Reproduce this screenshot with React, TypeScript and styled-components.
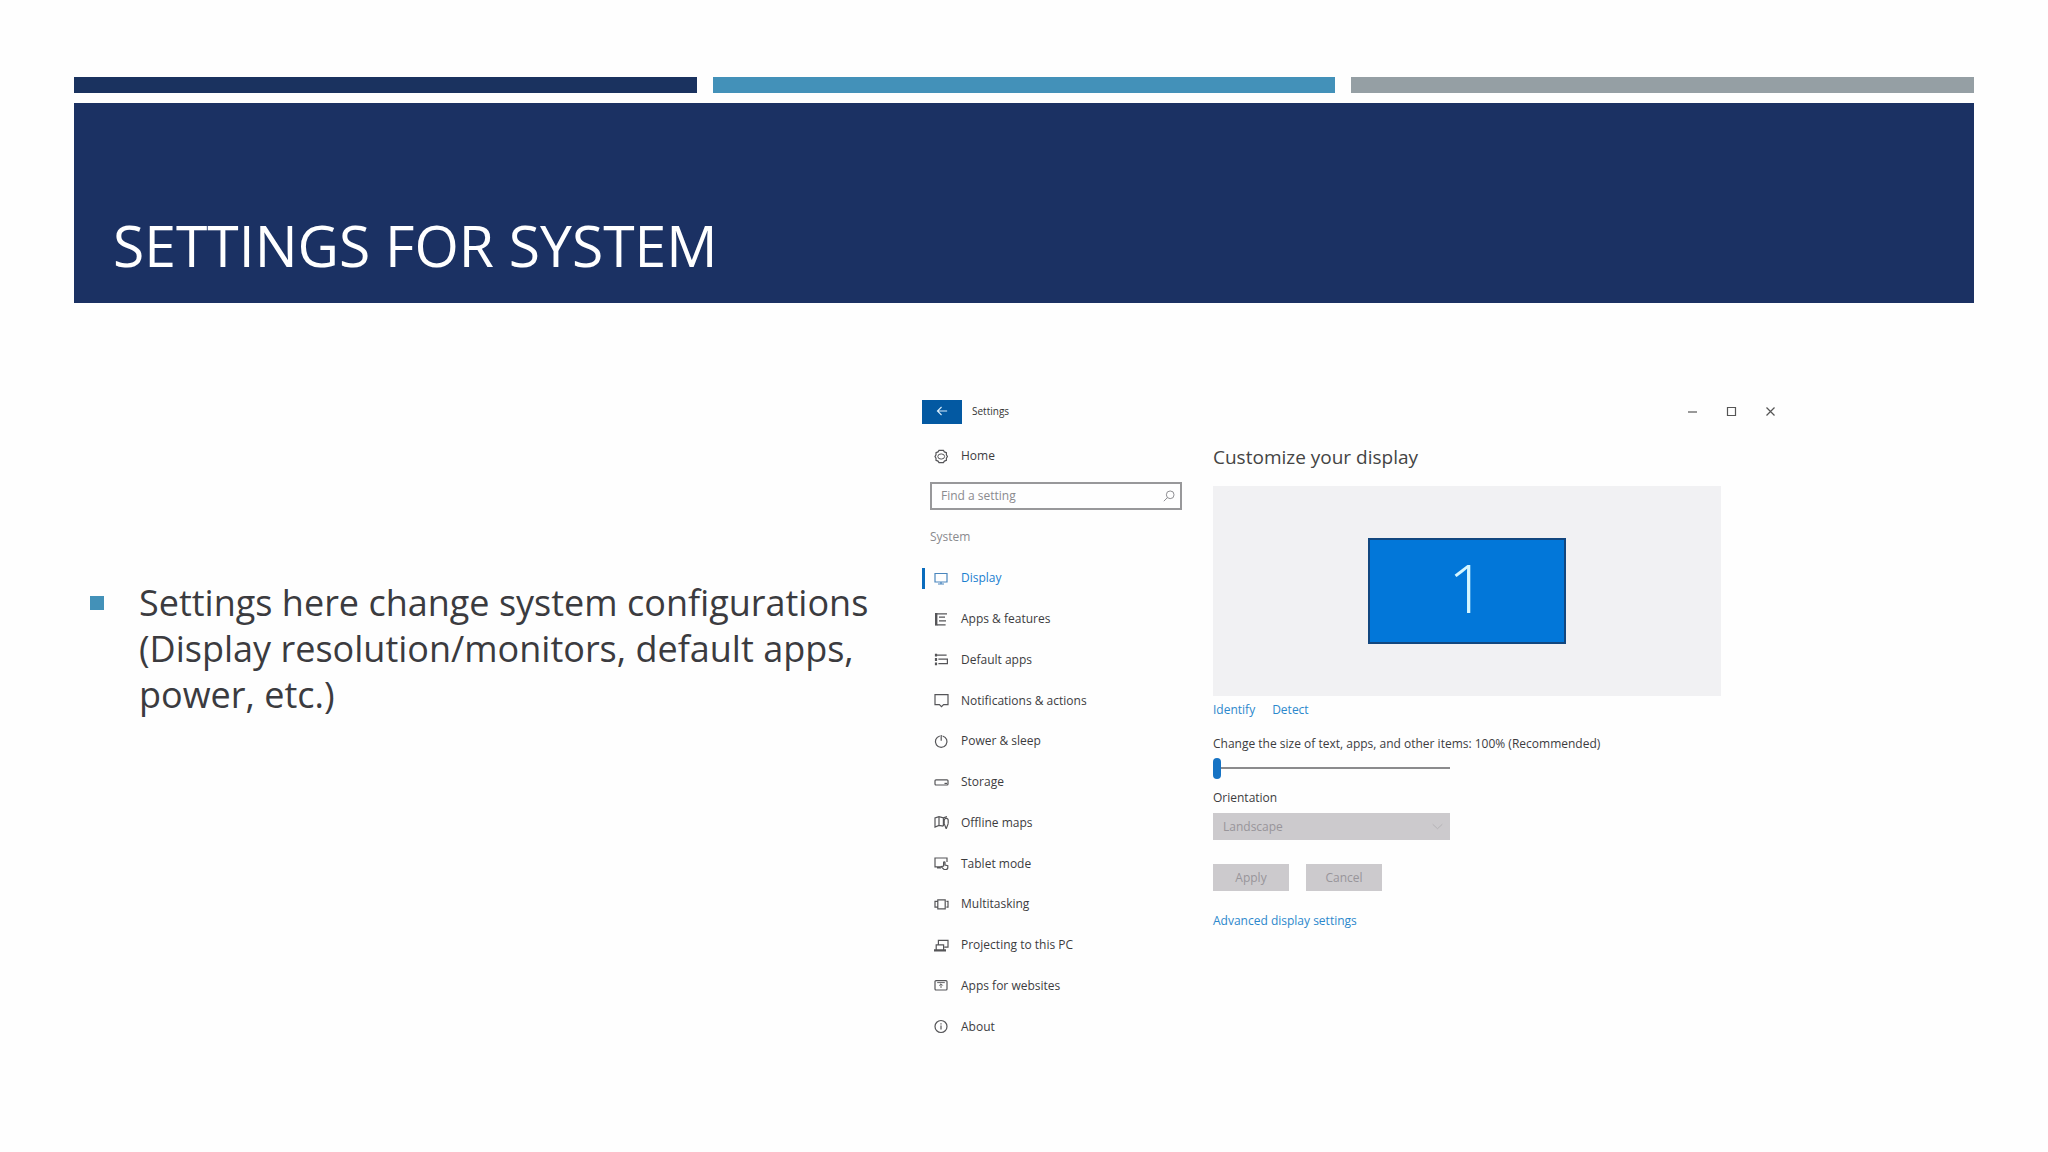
import React from "react";
import styled, { createGlobalStyle } from "styled-components";

const GlobalStyle = createGlobalStyle`
  *, *::before, *::after { box-sizing: border-box; }
  body {
    margin: 0;
    background: #fefefe;
    color: #3b3b3f;
    font-family: "Open Sans", "Noto Sans", sans-serif;
  }
  button, input, select { font: inherit; }
`;

const Slide = styled.main`
  min-height: 100vh;
  padding: 77px 74px 48px;
`;

const Stripes = styled.div`
  display: grid;
  grid-template-columns: repeat(3, 1fr);
  gap: 16px;
  margin-bottom: 10px;
`;

const Stripe = styled.div<{ $color: string }>`
  height: 16px;
  background: ${(p) => p.$color};
`;

const Banner = styled.header`
  display: flex;
  align-items: flex-end;
  min-height: 200px;
  padding: 0 39px 18px;
  background: #1b3163;
`;

const Title = styled.h1`
  margin: 0;
  color: #fff;
  font-size: 57px;
  line-height: 80px;
  font-weight: 400;
  text-transform: uppercase;
`;

const Body = styled.div`
  display: grid;
  grid-template-columns: 848fr 1052fr;
  padding-top: 97px;
`;

const Points = styled.ul`
  margin: 0;
  padding: 180px 16px 0;
  list-style: none;
`;

const Point = styled.li`
  display: flex;
  gap: 35px;
  font-size: 36px;
  line-height: 46px;

  &::before {
    content: "";
    flex: none;
    width: 14px;
    height: 14px;
    margin-top: 16px;
    background: #4391b8;
  }
`;

const Window = styled.section`
  max-width: 868px;
  font-size: 12px;
  line-height: 20px;
`;

const TitleBar = styled.div`
  display: flex;
  align-items: center;
  height: 24px;
`;

const BackButton = styled.button`
  display: grid;
  place-items: center;
  width: 40px;
  height: 24px;
  padding: 0 0 2px;
  border: 0;
  background: #0359a2;
  color: #d8ecfb;
`;

const WindowName = styled.span`
  flex: 1;
  padding: 0 0 2px 10px;
  font-size: 10px;
  color: #333;
`;

const WindowControls = styled.div`
  display: flex;
`;

const WindowButton = styled.button`
  display: grid;
  place-items: center;
  width: 39px;
  height: 24px;
  padding: 0 0 2px;
  border: 0;
  background: none;
  color: #555;
`;

const Columns = styled.div`
  display: grid;
  grid-template-columns: 260px minmax(0, 508px);
  column-gap: 31px;
`;

const Sidebar = styled.nav`
  padding-top: 12px;
`;

const NavItem = styled.a<{ $active?: boolean }>`
  display: flex;
  align-items: center;
  gap: 12px;
  height: 40px;
  padding-left: 12px;
  color: ${(p) => (p.$active ? "#1b7fd0" : "#3c3c3e")};
  text-decoration: none;
  background: ${(p) =>
    p.$active
      ? "linear-gradient(#0a6cbd, #0a6cbd) left center / 3px 21px no-repeat"
      : "none"};

  svg {
    flex: none;
    color: ${(p) => (p.$active ? "#4a86bd" : "#555558")};
  }
`;

const SearchBox = styled.label`
  display: flex;
  align-items: center;
  width: 252px;
  height: 28px;
  margin: 6px 0 17px 8px;
  padding: 0 5px 0 9px;
  border: 2px solid #98989a;
  color: #8a8a8e;
`;

const SearchInput = styled.input`
  flex: 1;
  min-width: 0;
  padding: 0;
  border: 0;
  outline: 0;
  background: none;
  color: inherit;

  &::placeholder { color: #8a8a8e; opacity: 1; }
`;

const GroupName = styled.h2`
  margin: 0 0 11px 8px;
  font-size: 12px;
  line-height: 20px;
  font-weight: 400;
  color: #8a8a8e;
`;

const NavList = styled.ul`
  display: grid;
  grid-auto-rows: 1fr;
  height: 489px;
  margin: 0;
  padding: 0;
  list-style: none;
  align-items: center;
`;

const Panel = styled.div`
  display: flex;
  flex-direction: column;
  align-items: flex-start;
  padding-top: 17px;
`;

const PanelTitle = styled.h2`
  margin: 0 0 13px;
  font-size: 19px;
  line-height: 32px;
  font-weight: 400;
  color: #444;
`;

const Preview = styled.div`
  display: grid;
  place-items: center;
  align-self: stretch;
  height: 210px;
  background: #f1f1f3;
`;

const Monitor = styled.div`
  width: 198px;
  height: 106px;
  border: 2px solid #12477f;
  background: #0277d9;
  color: #d5f6ff;
  font-size: 66px;
  line-height: 94px;
  font-weight: 300;
  text-align: center;
`;

const Links = styled.div`
  display: flex;
  gap: 17px;
  margin: 4px 0 14px;
`;

const TextLink = styled.a`
  color: #2c88cc;
  text-decoration: none;
`;

const FieldLabel = styled.label`
  color: #3c3c3e;
`;

const Slider = styled.input`
  appearance: none;
  width: 237px;
  height: 22px;
  margin: 3px 0 9px;
  background: linear-gradient(#8b8b8d, #8b8b8d) center / 100% 2px no-repeat;

  &::-webkit-slider-thumb {
    appearance: none;
    width: 8px;
    height: 21px;
    border-radius: 4px;
    background: #1673c4;
  }
`;

const SelectBox = styled.div`
  position: relative;
  width: 237px;
  margin: 5px 0 24px;
  color: #b2afb3;

  svg {
    position: absolute;
    top: 8px;
    right: 7px;
    pointer-events: none;
  }
`;

const Select = styled.select`
  display: block;
  appearance: none;
  width: 100%;
  height: 27px;
  padding: 0 10px;
  border: 0;
  border-radius: 0;
  background: #cccacd;
  color: #98959a;
  opacity: 1;
`;

const Actions = styled.div`
  display: flex;
  gap: 17px;
  margin-bottom: 20px;
`;

const ActionButton = styled.button`
  width: 76px;
  height: 27px;
  padding: 0;
  border: 0;
  background: #cccacd;
  color: #98959a;
`;

type IconProps = { size?: number; children: React.ReactNode };

function Icon({ size = 15, children }: IconProps) {
  return (
    <svg
      width={size}
      height={size}
      viewBox="0 0 15 15"
      fill="none"
      stroke="currentColor"
      strokeWidth="1.2"
      aria-hidden="true"
    >
      {children}
    </svg>
  );
}

const items: { label: string; icon: React.ReactNode }[] = [
  { label: "Display", icon: <path d="M1 2.5h12v8.5H1zM4 13h6M7 11v2" /> },
  {
    label: "Apps & features",
    icon: (
      <>
        <path d="M2.2 1v12.6" strokeWidth="2.4" />
        <path d="M3 1.8h10M5 5.2h6M5 8.8h7M3 12.8h8.6" />
      </>
    ),
  },
  {
    label: "Default apps",
    icon: (
      <>
        <path d="M2 1.8v11.4" strokeWidth="2.2" strokeDasharray="2.8 1.5" />
        <path d="M2 3.2h10.6M4.4 7.2h9v4.4h-9" />
      </>
    ),
  },
  {
    label: "Notifications & actions",
    icon: <path d="M1 1.6h13v10H9.6L7.5 13.6 5.4 11.6H1z" />,
  },
  {
    label: "Power & sleep",
    icon: <path d="M5.8 2a5.8 5.8 0 1 0 2.8 0M7.2 1v5.8" />,
  },
  {
    label: "Storage",
    icon: (
      <>
        <rect x="1" y="4.8" width="13" height="5.2" rx="1" />
        <path d="M10.5 8.4h2.6" />
      </>
    ),
  },
  {
    label: "Offline maps",
    icon: (
      <>
        <path d="M9.4 11.2 5 10.4 1 12V3l4-1.4 4.4 1.2L13 1.6M5 1.6v9M9.4 3v8" />
        <path d="M12.2 13.8 10.2 8.6M12.2 13.8l2-5.2M10.2 8.6V5.4a2 2 0 0 1 4 0v3.2" />
      </>
    ),
  },
  {
    label: "Tablet mode",
    icon: (
      <>
        <path d="M6.4 10.8H1V2h12v4M3 11.8h4" />
        <path d="M9.6 10V6.6c0-1 1.4-1 1.4 0V9l2.8.7v1.8c0 1.2-.8 2-2 2H10L7 10.6z" />
      </>
    ),
  },
  {
    label: "Multitasking",
    icon: (
      <path d="M3.8 2.8h7.4v9H3.8zM3.4 4.4H1v5.8h2.4M12.4 4.4H14v5.8h-1.6" />
    ),
  },
  {
    label: "Projecting to this PC",
    icon: (
      <path d="M4.4 6.6V2.4H14v6.8h-3.6M2.2 11.4V6.8h7.4v4.6M.6 11.8h10.8v1.2H.6z" />
    ),
  },
  {
    label: "Apps for websites",
    icon: (
      <>
        <rect x="1" y="2.6" width="12" height="9.4" rx="1" />
        <path d="M7 10V6M5.2 7.6 7 5.8l1.8 1.8M3.2 4.6h7.6" strokeWidth=".9" />
      </>
    ),
  },
  {
    label: "About",
    icon: (
      <>
        <circle cx="7" cy="7.5" r="6" />
        <path d="M7 6.6v4M7 4.2v1.4" />
      </>
    ),
  },
];

export default function App() {
  return (
    <>
      <GlobalStyle />
      <Slide>
        <Stripes>
          <Stripe $color="#1a325f" />
          <Stripe $color="#4391b9" />
          <Stripe $color="#959fa4" />
        </Stripes>
        <Banner>
          <Title>Settings for System</Title>
        </Banner>
        <Body>
          <Points>
            <Point>
              Settings here change system configurations (Display
              resolution/monitors, default apps, power, etc.)
            </Point>
          </Points>
          <Window aria-label="Settings">
            <TitleBar>
              <BackButton aria-label="Back">
                <Icon size={14}>
                  <path d="M13 7.5H2.4M7 3.2 2.6 7.5 7 11.8" />
                </Icon>
              </BackButton>
              <WindowName>Settings</WindowName>
              <WindowControls>
                <WindowButton aria-label="Minimize">
                  <Icon>
                    <path d="M3 8h9" />
                  </Icon>
                </WindowButton>
                <WindowButton aria-label="Maximize">
                  <Icon>
                    <path d="M3.5 3.5h8v8h-8z" />
                  </Icon>
                </WindowButton>
                <WindowButton aria-label="Close">
                  <Icon>
                    <path d="M3.5 3.5l8 8M11.5 3.5l-8 8" />
                  </Icon>
                </WindowButton>
              </WindowControls>
            </TitleBar>
            <Columns>
              <Sidebar>
                <NavItem href="#home">
                  <Icon>
                    <path d="M5 1.4h4.4l1 1.5 2 .8v2.2l1 1.6-1 1.6v2.2l-2 .8-1 1.5H5l-1-1.5-2-.8V9.1L1 7.5l1-1.6V3.7l2-.8z" />
                    <ellipse cx="7.2" cy="7.5" rx="3.4" ry="2.6" strokeWidth="1" />
                  </Icon>
                  Home
                </NavItem>
                <SearchBox>
                  <SearchInput
                    type="text"
                    placeholder="Find a setting"
                    aria-label="Find a setting"
                  />
                  <Icon size={12}>
                    <circle cx="9" cy="6" r="4.8" />
                    <path d="M5.6 9.4 1 14" />
                  </Icon>
                </SearchBox>
                <GroupName>System</GroupName>
                <NavList>
                  {items.map((item, i) => (
                    <li key={item.label}>
                      <NavItem href="#" $active={i === 0}>
                        <Icon>{item.icon}</Icon>
                        {item.label}
                      </NavItem>
                    </li>
                  ))}
                </NavList>
              </Sidebar>
              <Panel>
                <PanelTitle>Customize your display</PanelTitle>
                <Preview>
                  <Monitor>1</Monitor>
                </Preview>
                <Links>
                  <TextLink href="#identify">Identify</TextLink>
                  <TextLink href="#detect">Detect</TextLink>
                </Links>
                <FieldLabel htmlFor="scale">
                  Change the size of text, apps, and other items: 100%
                  (Recommended)
                </FieldLabel>
                <Slider id="scale" type="range" min={0} max={100} defaultValue={0} />
                <FieldLabel htmlFor="orientation">Orientation</FieldLabel>
                <SelectBox>
                  <Select id="orientation" disabled>
                    <option>Landscape</option>
                  </Select>
                  <Icon size={11}>
                    <path d="M1 4.5l6.5 6 6.5-6" />
                  </Icon>
                </SelectBox>
                <Actions>
                  <ActionButton disabled>Apply</ActionButton>
                  <ActionButton disabled>Cancel</ActionButton>
                </Actions>
                <TextLink href="#advanced">Advanced display settings</TextLink>
              </Panel>
            </Columns>
          </Window>
        </Body>
      </Slide>
    </>
  );
}
